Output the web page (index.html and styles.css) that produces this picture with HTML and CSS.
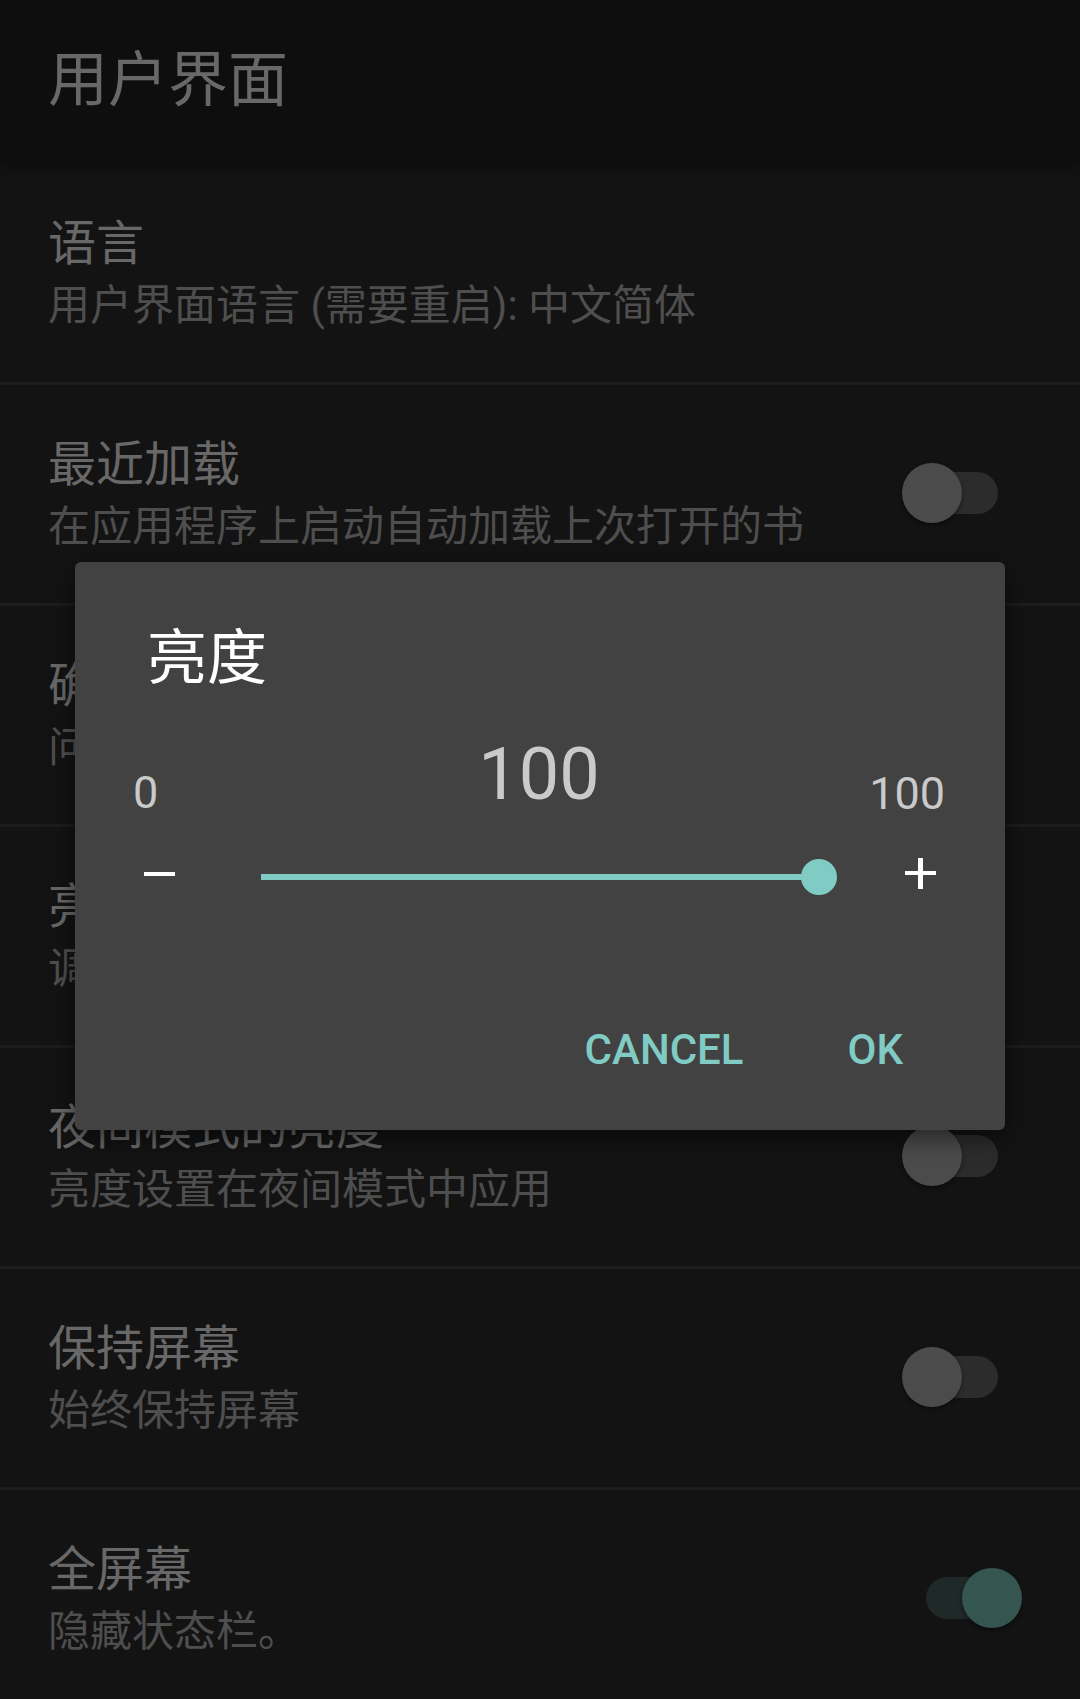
FILE: index.html
```html
<!DOCTYPE html>
<html lang="zh">
<head>
<meta charset="utf-8">
<title>用户界面</title>
<link rel="stylesheet" href="styles.css">
</head>
<body>
<div class="screen">
  <header class="appbar"><h1 class="appbar-title">用户界面</h1></header>
  <div class="list">
    <div class="pref">
      <div class="pref-text"><div class="pref-title">语言</div><div class="pref-sum">用户界面语言 (需要重启): 中文简体</div></div>
    </div>
    <div class="pref">
      <div class="pref-text"><div class="pref-title">最近加载</div><div class="pref-sum">在应用程序上启动自动加载上次打开的书</div></div>
      <div class="switch"><div class="track"></div><div class="thumb"></div></div>
    </div>
    <div class="pref">
      <div class="pref-text"><div class="pref-title">确认退出</div><div class="pref-sum">问是否确认关闭应用程序</div></div>
    </div>
    <div class="pref">
      <div class="pref-text"><div class="pref-title">亮度</div><div class="pref-sum">调整屏幕亮度</div></div>
    </div>
    <div class="pref">
      <div class="pref-text"><div class="pref-title">夜间模式的亮度</div><div class="pref-sum">亮度设置在夜间模式中应用</div></div>
      <div class="switch"><div class="track"></div><div class="thumb"></div></div>
    </div>
    <div class="pref">
      <div class="pref-text"><div class="pref-title">保持屏幕</div><div class="pref-sum">始终保持屏幕</div></div>
      <div class="switch"><div class="track"></div><div class="thumb"></div></div>
    </div>
    <div class="pref">
      <div class="pref-text"><div class="pref-title">全屏幕</div><div class="pref-sum">隐藏状态栏。</div></div>
      <div class="switch on"><div class="track"></div><div class="thumb"></div></div>
    </div>
  </div>

  <div class="dialog">
    <div class="dlg-title">亮度</div>
    <div class="values">
      <div class="val-min">0</div>
      <div class="val-cur">100</div>
      <div class="val-max">100</div>
    </div>
    <div class="slider-row">
      <div class="minus"></div>
      <div class="slider"><div class="slider-track"></div><div class="slider-thumb"></div></div>
      <div class="plus"></div>
    </div>
    <div class="buttons">
      <div class="btn">CANCEL</div>
      <div class="btn">OK</div>
    </div>
  </div>
</div>
</body>
</html>
```
FILE: styles.css
```css
html, body {
  margin: 0;
  padding: 0;
  background: #131313;
}
body {
  font-family: Roboto, "Noto Sans CJK SC", sans-serif;
}
.screen {
  position: relative;
  width: 1080px;
  height: 1699px;
  overflow: hidden;
  background: #131313;
}
.appbar {
  position: relative;
  z-index: 1;
  height: 164px;
  box-sizing: border-box;
  padding: 51px 0 0 48px;
  background: #0e0e0e;
  box-shadow: 0 3px 8px rgba(0, 0, 0, 0.35);
}
.appbar-title {
  margin: 0;
  font-size: 60px;
  line-height: 60px;
  font-weight: 400;
  color: #686868;
}
.list {
  display: flex;
  flex-direction: column;
}
.pref {
  height: 221px;
  box-sizing: border-box;
  border-bottom: 3px solid #1c1c1c;
  display: flex;
  align-items: center;
  justify-content: space-between;
  padding: 0 58px 0 48px;
  flex-shrink: 0;
}
.pref-text {
  display: flex;
  flex-direction: column;
}
.pref-title {
  font-size: 48px;
  line-height: 48px;
  color: #686868;
}
.pref-sum {
  margin-top: 17px;
  font-size: 42px;
  line-height: 42px;
  color: #4e4e4e;
}
.switch {
  position: relative;
  width: 120px;
  height: 60px;
  margin-bottom: 3px;
  flex-shrink: 0;
}
.switch .track {
  position: absolute;
  left: 24px;
  top: 9px;
  width: 72px;
  height: 42px;
  border-radius: 21px;
  background: #2c2c2c;
}
.switch .thumb {
  position: absolute;
  left: 0;
  top: 0;
  width: 60px;
  height: 60px;
  border-radius: 50%;
  background: #4b4b4b;
  box-shadow: 0 2px 4px rgba(0, 0, 0, 0.45);
}
.switch.on .track {
  background: #1f2927;
}
.switch.on .thumb {
  left: 60px;
  background: #355650;
}

.dialog {
  position: absolute;
  left: 75px;
  top: 562px;
  width: 930px;
  height: 568px;
  border-radius: 6px;
  background: #424242;
  box-shadow: 0 8px 24px rgba(0, 0, 0, 0.5);
  z-index: 2;
}
.dlg-title {
  padding: 67px 0 0 72px;
  font-size: 60px;
  line-height: 60px;
  color: #ffffff;
}
.values {
  margin-top: 50px;
  display: grid;
  grid-template-columns: 1fr auto 1fr;
  align-items: start;
  padding: 0 60px 0 58px;
  color: #cacaca;
}
.val-min {
  justify-self: start;
  margin-top: 31px;
  font-size: 45px;
  line-height: 45px;
}
.val-cur {
  justify-self: center;
  font-size: 72px;
  line-height: 72px;
}
.val-max {
  justify-self: end;
  margin-top: 32px;
  font-size: 45px;
  line-height: 45px;
}
.slider-row {
  margin-top: 31px;
  height: 60px;
  display: flex;
  align-items: center;
  padding-left: 69px;
}
.minus {
  width: 31px;
  height: 4px;
  margin-bottom: 6px;
  background: #ffffff;
}
.slider {
  position: relative;
  margin-left: 86px;
  width: 576px;
  height: 36px;
}
.slider-track {
  position: absolute;
  left: 0;
  top: 15px;
  width: 558px;
  height: 6px;
  background: #80cbc4;
}
.slider-thumb {
  position: absolute;
  right: 0;
  top: 0;
  width: 36px;
  height: 36px;
  border-radius: 50%;
  background: #80cbc4;
}
.plus {
  position: relative;
  margin-left: 68px;
  margin-bottom: 8px;
  width: 31px;
  height: 31px;
}
.plus::before,
.plus::after {
  content: "";
  position: absolute;
  background: #ffffff;
}
.plus::before {
  left: 0;
  top: 13px;
  width: 31px;
  height: 4px;
}
.plus::after {
  left: 13px;
  top: 0;
  width: 5px;
  height: 31px;
}
.buttons {
  margin-top: 122px;
  display: flex;
  justify-content: flex-end;
  gap: 104px;
  padding-right: 102px;
}
.btn {
  font-size: 42px;
  line-height: 42px;
  font-weight: 500;
  color: #80cbc4;
}
```
